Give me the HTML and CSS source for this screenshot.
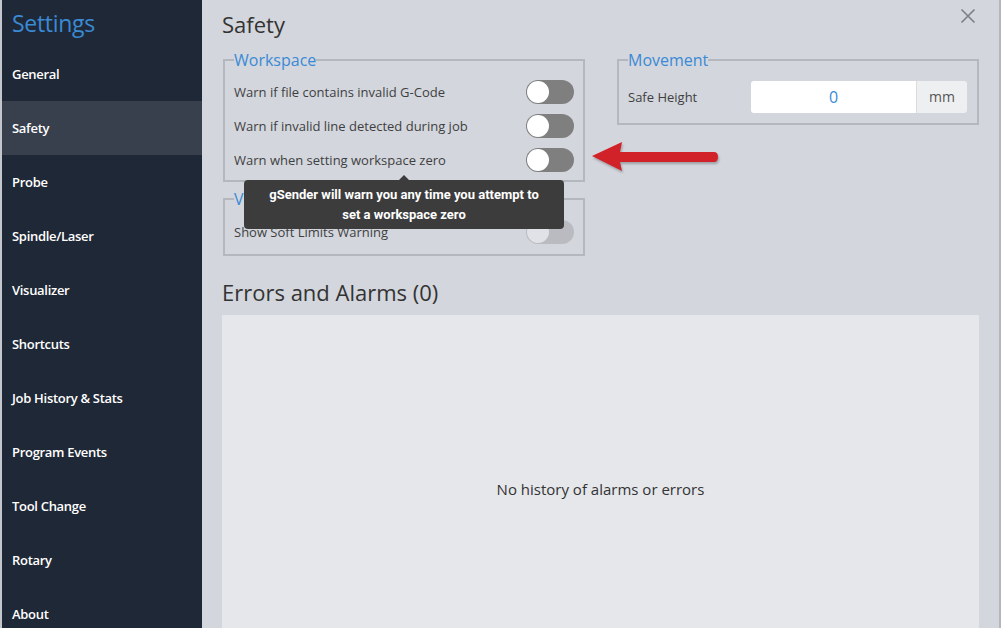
FILE: index.html
```html
<!DOCTYPE html>
<html>
<head>
<meta charset="utf-8">
<link rel="stylesheet" href="styles.css">
</head>
<body>
<div class="app">
  <nav class="sidebar">
    <h1 class="brand">Settings</h1>
    <ul class="nav">
      <li class="nav-item">General</li>
      <li class="nav-item active">Safety</li>
      <li class="nav-item">Probe</li>
      <li class="nav-item">Spindle/Laser</li>
      <li class="nav-item">Visualizer</li>
      <li class="nav-item">Shortcuts</li>
      <li class="nav-item">Job History &amp; Stats</li>
      <li class="nav-item">Program Events</li>
      <li class="nav-item">Tool Change</li>
      <li class="nav-item">Rotary</li>
      <li class="nav-item">About</li>
    </ul>
  </nav>
  <main class="main">
    <button class="close" aria-label="Close">
      <svg width="16" height="16" viewBox="0 0 16 16"><path d="M1.5 1.5 L14.5 14.5 M14.5 1.5 L1.5 14.5" stroke="#7b7e84" stroke-width="1.6" fill="none"/></svg>
    </button>
    <h2 class="title">Safety</h2>
    <div class="columns">
      <div class="col">
        <fieldset class="group">
          <legend>Workspace</legend>
          <div class="row"><span>Warn if file contains invalid G-Code</span><span class="toggle"></span></div>
          <div class="row"><span>Warn if invalid line detected during job</span><span class="toggle"></span></div>
          <div class="row tip-anchor"><span>Warn when setting workspace zero</span><span class="toggle"></span>
            <div class="tooltip">gSender will warn you any time you attempt to<br>set a workspace zero</div>
          </div>
        </fieldset>
        <fieldset class="group second">
          <legend>Visualizer</legend>
          <div class="row"><span>Show Soft Limits Warning</span><span class="toggle disabled"></span></div>
        </fieldset>
      </div>
      <div class="col">
        <fieldset class="group movement">
          <legend>Movement</legend>
          <div class="row input-row">
            <span>Safe Height</span>
            <div class="input-group"><span class="input">0</span><span class="addon">mm</span></div>
          </div>
        </fieldset>
      </div>
    </div>
    <h2 class="title errors">Errors and Alarms (0)</h2>
    <div class="panel">No history of alarms or errors</div>
    <svg class="arrow" width="130" height="34" viewBox="0 0 130 34">
      <path d="M2 15 L32 1 L30 11 L124 11 Q128 11 128 16 Q128 21 124 21 L30 21 L32 30 Z" fill="#d22229"/>
    </svg>
  </main>
</div>
</body>
</html>
```

FILE: styles.css
```css
* { box-sizing: border-box; }
html, body { margin: 0; padding: 0; }
body {
  width: 1001px;
  height: 628px;
  overflow: hidden;
  font-family: "Open Sans", "Liberation Sans", sans-serif;
  background: #d3d6dd;
}
.app {
  display: flex;
  height: 628px;
  border-left: 2px solid #c3c6cc;
  border-right: 2px solid #b3b6bc;
}
.sidebar {
  width: 200px;
  flex: none;
  background: #1f2836;
}
.brand {
  margin: 0;
  height: 47px;
  padding-left: 10px;
  font-size: 23px;
  font-weight: 400;
  line-height: 47px;
  color: #3a8ad5;
  letter-spacing: -0.3px;
}
.nav { list-style: none; margin: 0; padding: 0; }
.nav-item {
  height: 54px;
  line-height: 54px;
  padding-left: 10px;
  font-size: 13px;
  font-weight: 600;
  color: #fff;
  letter-spacing: -0.3px;
}
.nav-item.active { background: #383f4d; }
.main {
  flex: 1;
  position: relative;
  padding: 8px 20px 0 20px;
  display: flex;
  flex-direction: column;
}
.close {
  position: absolute;
  top: 8px;
  right: 23px;
  border: 0;
  background: none;
  padding: 0;
}
.title {
  margin: 0;
  font-size: 22px;
  font-weight: 400;
  color: #333;
  line-height: 32px;
}
.columns {
  display: flex;
  gap: 32px;
  margin-top: 10px;
  padding-left: 1px;
}
.col { flex: 1; min-width: 0; display: flex; flex-direction: column; gap: 7px; }
.group {
  margin: 0;
  border: 2px solid #b4b7be;
  padding: 5px 9px 3px 9px;
  min-width: 0;
}
.group legend {
  padding: 0;
  font-size: 16px;
  line-height: 20px;
  color: #3a8ad5;
}
.row {
  display: flex;
  align-items: center;
  justify-content: space-between;
  height: 34px;
  font-size: 13px;
  color: #3f3f3f;
}
.tip-anchor { position: relative; }
.toggle {
  width: 48px;
  height: 24px;
  border-radius: 12px;
  background: #7f7f7f;
  position: relative;
}
.toggle::after {
  content: "";
  position: absolute;
  left: 1px;
  top: 1px;
  width: 22px;
  height: 22px;
  border-radius: 50%;
  background: #fff;
}
.toggle.disabled { opacity: 0.3; }
.second { padding: 6px 9px 5px 9px; }
.movement { padding: 5px 10px 8px 9px; }
.input-row { height: 40px; padding-top: 3px; }
.input-group {
  display: flex;
  width: 216px;
  height: 32px;
  border-radius: 3px;
  overflow: hidden;
}
.input {
  flex: 1;
  background: #fff;
  color: #3a8ad5;
  font-size: 16px;
  line-height: 32px;
  text-align: center;
}
.addon {
  width: 51px;
  background: #eeeff1;
  border-left: 1px solid #dadcdf;
  color: #555;
  font-size: 14px;
  line-height: 32px;
  text-align: center;
}
.tooltip {
  position: absolute;
  left: 10px;
  top: 37px;
  width: 320px;
  height: 49px;
  padding-top: 5px;
  background: #3c3c3c;
  border-radius: 4px;
  color: #fff;
  font-family: Roboto, "Liberation Sans", sans-serif;
  font-weight: 700;
  font-size: 13px;
  line-height: 20px;
  text-align: center;
  z-index: 2;
}
.tooltip::before {
  content: "";
  position: absolute;
  left: 155px;
  top: -5px;
  border-left: 5px solid transparent;
  border-right: 5px solid transparent;
  border-bottom: 5px solid #3c3c3c;
}
.errors { margin-top: 20px; }
.panel {
  flex: 1;
  margin-top: 7px;
  background: #e5e7eb;
  display: flex;
  align-items: center;
  justify-content: center;
  font-size: 15px;
  color: #333;
  padding-top: 34px;
}
.arrow {
  position: absolute;
  left: 388px;
  top: 141px;
  filter: drop-shadow(1px 2px 1px rgba(0,0,0,0.25));
}
```
